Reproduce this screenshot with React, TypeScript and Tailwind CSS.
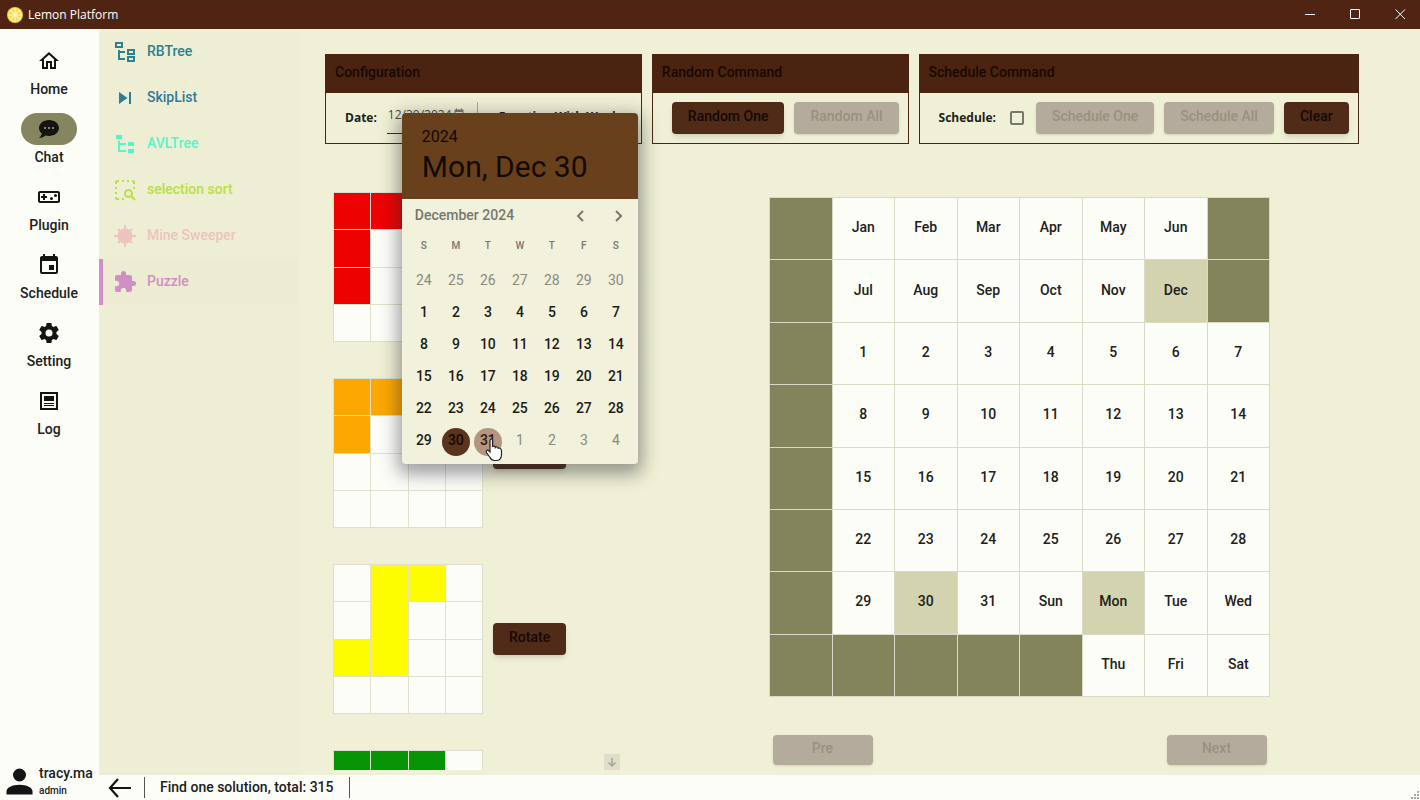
import React from "react";
import { MdEvent, MdOutlineVideogameAsset, MdSkipNext } from "react-icons/md";

const PATHS = {
  home: "M12 5.69L17 10.19V18H15V12H9V18H7V10.19L12 5.69M12 3L2 12H5V20H11V14H13V20H19V12H22",
  chat: "M12,3C17.5,3 22,6.58 22,11C22,15.42 17.5,19 12,19C10.76,19 9.57,18.82 8.47,18.5C5.55,21 2,21 2,21C4.33,18.67 4.7,17.1 4.75,16.5C3.05,15.07 2,13.14 2,11C2,6.58 6.5,3 12,3M17,12V10H15V12H17M13,12V10H11V12H13M9,12V10H7V12H9Z",
  cog: "M12,15.5A3.5,3.5 0 0,1 8.5,12A3.5,3.5 0 0,1 12,8.5A3.5,3.5 0 0,1 15.5,12A3.5,3.5 0 0,1 12,15.5M19.43,12.97C19.47,12.65 19.5,12.33 19.5,12C19.5,11.67 19.47,11.34 19.43,11L21.54,9.37C21.73,9.22 21.78,8.95 21.66,8.73L19.66,5.27C19.54,5.05 19.27,4.96 19.05,5.05L16.56,6.05C16.04,5.66 15.5,5.32 14.87,5.07L14.5,2.42C14.46,2.18 14.25,2 14,2H10C9.75,2 9.54,2.18 9.5,2.42L9.13,5.07C8.5,5.32 7.96,5.66 7.44,6.05L4.95,5.05C4.73,4.96 4.46,5.05 4.34,5.27L2.34,8.73C2.21,8.95 2.27,9.22 2.46,9.37L4.57,11C4.53,11.34 4.5,11.67 4.5,12C4.5,12.33 4.53,12.65 4.57,12.97L2.46,14.63C2.27,14.78 2.21,15.05 2.34,15.27L4.34,18.73C4.46,18.95 4.73,19.03 4.95,18.95L7.44,17.94C7.96,18.34 8.5,18.68 9.13,18.93L9.5,21.58C9.54,21.82 9.75,22 10,22H14C14.25,22 14.46,21.82 14.5,21.58L14.87,18.93C15.5,18.67 16.04,18.34 16.56,17.94L19.05,18.95C19.27,19.03 19.54,18.95 19.66,18.73L21.66,15.27C21.78,15.05 21.73,14.78 21.54,14.63L19.43,12.97Z",
  log: "M3 3H21V21H3V3M5 5V19H19V5H5M7 7H17V12H7V7M7 14H17V15H7V14M7 16H17V17H7V16Z",
  treeOutline:
    "M12 13H7V18H12V20H5V10H7V11H12V13M8 4V6H4V4H8M10 2H2V8H10V2M20 11V13H16V11H20M22 9H14V15H22V9M20 18V20H16V18H20M22 16H14V22H22V16Z",
  tree: "M3,3H9V7H3V3M15,10H21V14H15V10M15,17H21V21H15V17M13,13H7V18H13V20H7L5,20V9H7V11H13V13Z",
  puzzle:
    "M20.5,11H19V7C19,5.89 18.1,5 17,5H13V3.5A2.5,2.5 0 0,0 10.5,1A2.5,2.5 0 0,0 8,3.5V5H4A2,2 0 0,0 2,7V10.8H3.5C5,10.8 6.2,12 6.2,13.5C6.2,15 5,16.2 3.5,16.2H2V20A2,2 0 0,0 4,22H7.8V20.5C7.8,19 9,17.8 10.5,17.8C12,17.8 13.2,19 13.2,20.5V22H17A2,2 0 0,0 19,20V16H20.5A2.5,2.5 0 0,0 23,13.5A2.5,2.5 0 0,0 20.5,11Z",
  account:
    "M12,4A4,4 0 0,1 16,8A4,4 0 0,1 12,12A4,4 0 0,1 8,8A4,4 0 0,1 12,4M12,14C16.42,14 20,15.79 20,18V20H4V18C4,15.79 7.58,14 12,14Z",
};

function Icon({ d, className }: { d: string; className: string }) {
  return (
    <svg viewBox="0 0 24 24" className={className} fill="currentColor" fillRule="evenodd" aria-hidden="true">
      <path d={d} />
    </svg>
  );
}

function SelectSearchIcon() {
  return (
    <svg viewBox="0 0 24 24" className="size-6" fill="none" stroke="currentColor" strokeWidth="2" aria-hidden="true">
      <path d="M3 6V4.500Q3 3 4.500 3H6M9 3H11M14 3H16M19 3H19.500Q21 3 21 4.500V6M3 9V11M3 14V16M3 19V19.500Q3 21 4.500 21H6M9 21H11M21 9V11" />
      <circle cx="15.500" cy="15.500" r="3.500" />
      <path d="M18 18L22 22" />
    </svg>
  );
}

function MineIcon() {
  return (
    <svg viewBox="0 0 24 24" className="size-6" stroke="currentColor" strokeWidth="2" aria-hidden="true">
      <circle cx="12" cy="12" r="6.500" fill="currentColor" />
      <path d="M12 1V23M1 12H23M5 5L19 19M19 5L5 19" />
    </svg>
  );
}

function LemonIcon() {
  return (
    <svg viewBox="0 0 16 16" className="size-4" aria-hidden="true">
      <circle cx="8" cy="8" r="8" fill="#f0d030" />
      <circle cx="8" cy="8" r="6.700" fill="#fff8c8" />
      <circle cx="8" cy="8" r="5.900" fill="#f3d944" />
      <path d="M8 2V14M2 8H14M4 4L12 12M12 4L4 12" stroke="#fff8c8" strokeWidth="1.100" />
    </svg>
  );
}

const NAV = [
  { label: "Home", icon: <Icon d={PATHS.home} className="size-6" /> },
  { label: "Chat", icon: <Icon d={PATHS.chat} className="size-6" />, active: true },
  { label: "Plugin", icon: <MdOutlineVideogameAsset className="size-6" /> },
  { label: "Schedule", icon: <MdEvent className="size-6" /> },
  { label: "Setting", icon: <Icon d={PATHS.cog} className="size-6" /> },
  { label: "Log", icon: <Icon d={PATHS.log} className="size-6" /> },
];

const TABS = [
  { label: "RBTree", tone: "text-[#2b8290]", icon: <Icon d={PATHS.treeOutline} className="size-6" /> },
  { label: "SkipList", tone: "text-[#2f7b9c]", icon: <MdSkipNext className="size-6" /> },
  { label: "AVLTree", tone: "text-[#55f5cc]", icon: <Icon d={PATHS.tree} className="size-6" /> },
  { label: "selection sort", tone: "text-[#b9e03f]", icon: <SelectSearchIcon /> },
  { label: "Mine Sweeper", tone: "text-[#edc4bd]", icon: <MineIcon /> },
  { label: "Puzzle", tone: "text-[#cf8fc6]", icon: <Icon d={PATHS.puzzle} className="size-6" />, active: true },
];

const PIECES = [
  { color: "bg-[#ee0200]", cells: ["##..", "#...", "#...", "...."] },
  { color: "bg-[#fca800]", cells: ["##..", "#...", "....", "...."] },
  { color: "bg-[#fdfd00]", cells: [".##.", ".#..", "##..", "...."] },
  { color: "bg-[#079407]", cells: ["###.", "#...", "#...", "...."] },
];

const BOARD = [
  ["", "Jan", "Feb", "Mar", "Apr", "May", "Jun", ""],
  ["", "Jul", "Aug", "Sep", "Oct", "Nov", "Dec", ""],
  ["", "1", "2", "3", "4", "5", "6", "7"],
  ["", "8", "9", "10", "11", "12", "13", "14"],
  ["", "15", "16", "17", "18", "19", "20", "21"],
  ["", "22", "23", "24", "25", "26", "27", "28"],
  ["", "29", "30", "31", "Sun", "Mon", "Tue", "Wed"],
  ["", "", "", "", "", "Thu", "Fri", "Sat"],
];
const PICKED = ["Dec", "30", "Mon"];

const WEEKS = [
  [24, 25, 26, 27, 28, 29, 30],
  [1, 2, 3, 4, 5, 6, 7],
  [8, 9, 10, 11, 12, 13, 14],
  [15, 16, 17, 18, 19, 20, 21],
  [22, 23, 24, 25, 26, 27, 28],
  [29, 30, 31, 1, 2, 3, 4],
];

function ActionButton({ children, disabled = false }: { children: React.ReactNode; disabled?: boolean }) {
  return (
    <button
      type="button"
      disabled={disabled}
      className={
        disabled
          ? "h-8 shrink-0 whitespace-nowrap rounded-sm bg-[#b5ab9c] px-4 pb-1 font-medium text-[#9b9080] shadow-sm"
          : "h-8 shrink-0 whitespace-nowrap rounded-sm bg-[#4f2b18] px-4 pb-1 font-medium text-[#150805] shadow-md"
      }
    >
      {children}
    </button>
  );
}

function Group({ title, children }: { title: string; children: React.ReactNode }) {
  return (
    <section className="border border-[#4c2413]">
      <h2 className="h-[38px] bg-[#4a2410] px-[9px] leading-[34px] font-medium text-[#180803]">{title}</h2>
      <div className="flex h-[50px] items-center gap-[10px] pr-[9px] pl-[19px]">{children}</div>
    </section>
  );
}

function Calendar() {
  return (
    <div
      role="dialog"
      aria-label="Choose date"
      className="absolute top-[11px] left-[15px] z-10 h-[351px] w-[236px] rounded-sm bg-[#f1f1dc] shadow-[0_6px_18px_4px_rgba(40,40,50,0.45)]"
    >
      <div className="h-[86px] rounded-t-sm bg-[#68401c] px-5 pt-3 text-[#140a05]">
        <div className="text-base leading-6">2024</div>
        <div className="whitespace-nowrap text-3xl leading-9">Mon, Dec 30</div>
      </div>
      <div className="flex h-8 items-center justify-between pr-3 pl-[13px] text-[#777770]">
        <span className="font-medium">December 2024</span>
        <span className="flex gap-[22px]">
          <button type="button" aria-label="Previous month">
            <svg viewBox="0 0 16 16" className="size-4" fill="none" stroke="currentColor" strokeWidth="2">
              <path d="M11 4L6 9L11 14" />
            </svg>
          </button>
          <button type="button" aria-label="Next month">
            <svg viewBox="0 0 16 16" className="size-4" fill="none" stroke="currentColor" strokeWidth="2">
              <path d="M6 4L11 9L6 14" />
            </svg>
          </button>
        </span>
      </div>
      <table className="mx-1.5 table-fixed border-collapse text-center">
        <thead>
          <tr className="h-[33px] text-[10px] text-[#777770]">
            {["S", "M", "T", "W", "T", "F", "S"].map((d, i) => (
              <th key={i} className="w-8 p-0 pb-[3px] font-medium">
                {d}
              </th>
            ))}
          </tr>
        </thead>
        <tbody>
          {WEEKS.map((week, r) => (
            <tr key={r} className="h-8">
              {week.map((day, c) => {
                const outside = (r === 0 && day > 20) || (r === 5 && day < 10);
                let look = "text-[#1c1c18] font-medium";
                if (outside) look = "text-[#8a8a80]";
                else if (day === 30) look = "bg-[#5a341c] text-[#140a05] font-medium";
                else if (day === 31) look = "bg-[#b39580] text-[#2a1c12] font-medium";
                return (
                  <td key={c} className="w-8 p-0 pt-1">
                    <button type="button" className={"size-7 rounded-full pb-1 align-top leading-6 " + look}>
                      {day}
                    </button>
                  </td>
                );
              })}
            </tr>
          ))}
        </tbody>
      </table>
      <svg viewBox="0 0 18 24" className="absolute top-[325px] left-[83px] h-6 w-[18px]" aria-hidden="true">
        <path
          d="M5 2.500Q5 1 6.300 1Q7.500 1 7.500 2.500V9Q8 7.800 9.300 8.200Q10.200 8.400 10.300 9.500Q11 8.500 12.200 9Q13 9.300 13.100 10.300Q14 9.700 15 10.300Q16.500 11 16.500 13V17Q16 22.500 11.500 22.500H9.500Q6.500 22.500 5 19.500L1.500 14.500Q.8 12.800 2 12.200Q3.200 11.700 5 14Z"
          fill="#ffffff"
          stroke="#222222"
          strokeWidth="1.200"
        />
      </svg>
    </div>
  );
}

export default function App() {
  return (
    <div className="flex h-screen flex-col overflow-hidden bg-[#fdfdf8] font-[Roboto,'Liberation_Sans',sans-serif] text-sm text-[#20201c]">
      <header className="flex h-[29px] shrink-0 items-center gap-[5px] bg-[#4f2412] pl-[7px] text-white">
        <LemonIcon />
        <h1 className="grow font-['Open_Sans',sans-serif] text-xs">Lemon Platform</h1>
        <button type="button" aria-label="Minimize" className="flex h-full w-10 items-center justify-center">
          <svg viewBox="0 0 11 11" className="size-[11px]" stroke="currentColor">
            <path d="M0 5.500H10" />
          </svg>
        </button>
        <button type="button" aria-label="Maximize" className="flex h-full w-10 items-center justify-center">
          <svg viewBox="0 0 11 11" className="size-[11px]" fill="none" stroke="currentColor">
            <rect x="0.500" y="0.500" width="9" height="9" rx="0.500" />
          </svg>
        </button>
        <button type="button" aria-label="Close" className="flex h-full w-10 items-center justify-center">
          <svg viewBox="0 0 11 11" className="size-[11px]" stroke="currentColor">
            <path d="M0.500 0.500L10 10M10 0.500L0.500 10" />
          </svg>
        </button>
      </header>

      <div className="flex min-h-0 grow">
        <nav className="flex w-[99px] shrink-0 flex-col justify-between pt-4 pr-px" aria-label="Main">
          <ul className="flex flex-col gap-4">
            {NAV.map((item) => (
              <li key={item.label}>
                <button type="button" className="flex w-full flex-col items-center font-medium">
                  <span
                    className={
                      item.active
                        ? "flex h-8 w-14 items-center justify-center rounded-full bg-[#85855f] text-[#141414]"
                        : "flex h-8 w-14 items-center justify-center text-[#141414]"
                    }
                  >
                    {item.icon}
                  </span>
                  <span className="-mb-0.5 pt-0.5 leading-5">{item.label}</span>
                </button>
              </li>
            ))}
          </ul>
          <div className="flex h-[38px] items-center">
            <Icon d={PATHS.account} className="size-[39px] shrink-0 text-[#141414]" />
            <div className="font-medium">
              <div className="leading-5">tracy.ma</div>
              <div className="text-[10px] leading-4">admin</div>
            </div>
          </div>
        </nav>

        <div className="flex min-w-0 grow flex-col">
          <div className="flex min-h-0 grow bg-[#f0f0d6]">
            <nav className="w-[200px] shrink-0 bg-[#eeeed4]" aria-label="Plugins">
              {TABS.map((tab) => (
                <button
                  key={tab.label}
                  type="button"
                  className={
                    (tab.active
                      ? "border-l-4 border-[#cf8fc6] bg-[#edebd1] pl-[10px] "
                      : "pl-[14px] ") +
                    "flex h-[46px] w-full items-center gap-[10px] text-left font-medium " +
                    tab.tone
                  }
                >
                  {tab.icon}
                  <span className="pb-0.5">{tab.label}</span>
                </button>
              ))}
            </nav>

            <main className="flex min-w-0 grow flex-col overflow-hidden pt-[25px] pr-1.5 pb-[5px] pl-[26px]">
              <div className="flex items-start gap-[10px]">
                <Group title="Configuration">
                  <label htmlFor="date" className="font-['Open_Sans',sans-serif] text-xs font-bold">
                    Date:
                  </label>
                  <div className="relative flex h-8 w-20 items-start border-b border-[#4c2413]">
                    <input
                      id="date"
                      defaultValue="12/30/2024"
                      className="h-6 w-[66px] bg-transparent pl-px font-['Open_Sans',sans-serif] text-xs text-[#4a4a44] outline-none"
                    />
                    <MdEvent className="mt-1.5 size-3 text-[#77776c]" />
                    <Calendar />
                  </div>
                  <span className="h-8 w-px bg-[#a8a89c]" />
                  <span className="w-[144px] pb-0.5 pl-[11px] font-['Open_Sans',sans-serif] text-xs font-bold whitespace-nowrap">
                    Function With Week:
                  </span>
                </Group>
                <Group title="Random Command">
                  <ActionButton>Random One</ActionButton>
                  <ActionButton disabled>Random All</ActionButton>
                </Group>
                <Group title="Schedule Command">
                  <label htmlFor="schedule" className="font-['Open_Sans',sans-serif] text-xs font-bold">
                    Schedule:
                  </label>
                  <input
                    id="schedule"
                    type="checkbox"
                    className="mr-0.5 ml-1 size-[14px] appearance-none rounded-xs border-2 border-[#77776c]"
                  />
                  <ActionButton disabled>Schedule One</ActionButton>
                  <ActionButton disabled>Schedule All</ActionButton>
                  <ActionButton>Clear</ActionButton>
                </Group>
              </div>

              <div className="flex min-h-0 grow">
                <div className="flex w-[300px] shrink-0 items-end justify-between pt-12 pr-[5px] pl-2">
                  <div className="flex h-full flex-col gap-9 overflow-hidden pr-1">
                    {PIECES.map((piece) => (
                      <div key={piece.color} className="flex shrink-0 items-center gap-[10px]">
                        <div className="grid size-[150px] shrink-0 grid-cols-4 grid-rows-4 gap-px border border-[#deded0] bg-[#e0e0cc]">
                          {piece.cells
                            .join("")
                            .split("")
                            .map((cell, i) => (
                              <span key={i} className={cell === "#" ? piece.color : "bg-[#fdfdf8]"} />
                            ))}
                        </div>
                        <ActionButton>Rotate</ActionButton>
                      </div>
                    ))}
                  </div>
                  <button
                    type="button"
                    aria-label="Scroll down"
                    className="flex size-4 items-center justify-center bg-[#dedecb] text-[#a5a598]"
                  >
                    <svg viewBox="0 0 10 10" className="size-[10px]" fill="none" stroke="currentColor" strokeWidth="1.500">
                      <path d="M5 1V9M1.500 5.500L5 9L8.500 5.500" />
                    </svg>
                  </button>
                </div>

                <div className="flex grow flex-col items-center pt-[53px]">
                  <table className="h-[500px] w-[501px] table-fixed border-collapse text-center font-medium">
                    <tbody>
                      {BOARD.map((row, r) => (
                        <tr key={r}>
                          {row.map((text, c) => {
                            let fill = "bg-[#fdfdf8]";
                            if (!text) fill = "bg-[#83835c]";
                            else if (PICKED.includes(text)) fill = "bg-[#d3d3b0]";
                            return (
                              <td key={c} className={"border border-[#d9d9c8] p-0 pb-[3px] " + fill}>
                                {text}
                              </td>
                            );
                          })}
                        </tr>
                      ))}
                    </tbody>
                  </table>
                  <div className="mt-[38px] flex w-[494px] justify-between">
                    {["Pre", "Next"].map((label) => (
                      <button
                        key={label}
                        type="button"
                        disabled
                        className="h-[30px] w-[100px] rounded-sm bg-[#b5ab9c] pb-1 font-medium text-[#9b9080] shadow-sm"
                      >
                        {label}
                      </button>
                    ))}
                  </div>
                </div>
              </div>
            </main>
          </div>

          <footer className="flex h-[25px] shrink-0 items-center font-medium">
            <button type="button" aria-label="Back" className="mr-3 ml-[9px]">
              <svg viewBox="0 0 24 20" className="h-5 w-6" fill="none" stroke="#141414" strokeWidth="2.200">
                <path d="M23 10H2M10 1L2 10L10 19" />
              </svg>
            </button>
            <span className="h-[21px] w-px bg-[#55554c]" />
            <span className="px-[15px] pb-0.5">Find one solution, total: 315</span>
            <span className="h-[21px] w-px bg-[#55554c]" />
            <svg viewBox="0 0 10 10" className="ml-auto size-[10px] self-end" fill="#a9a9b0" aria-hidden="true">
              <path d="M7 1h2v2H7zM4 4h2v2H4zM7 4h2v2H7zM1 7h2v2H1zM4 7h2v2H4zM7 7h2v2H7z" />
            </svg>
          </footer>
        </div>
      </div>
    </div>
  );
}
